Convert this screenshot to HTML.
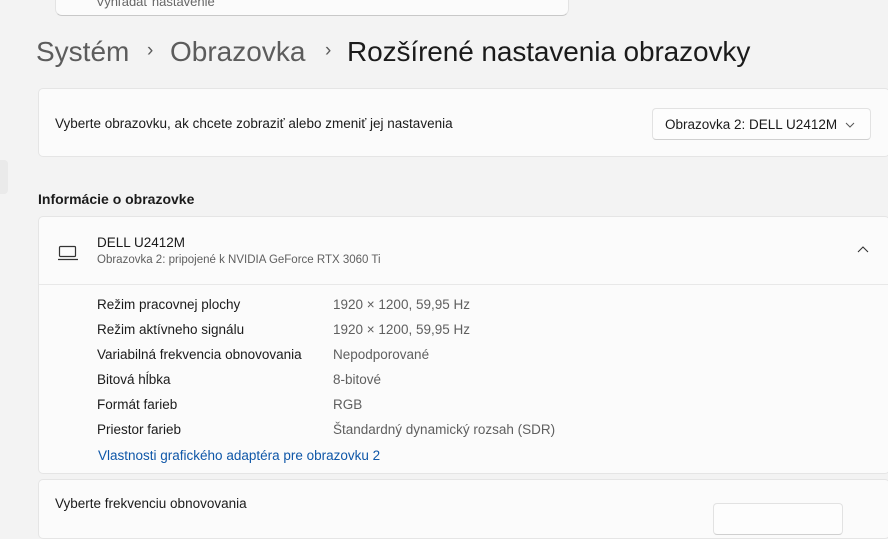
<!DOCTYPE html>
<html><head><meta charset="utf-8"><style>
*{margin:0;padding:0;box-sizing:border-box}
body{width:888px;height:510px;overflow:hidden;background:#f3f3f3;font-family:"Segoe UI","Liberation Sans",sans-serif;color:#1b1b1b;position:relative}
.abs{position:absolute;white-space:nowrap}
.search{left:55px;top:-20px;width:514px;height:36px;background:#fbfbfb;border:1px solid #e3e3e3;border-bottom-color:#c8c8c8;border-radius:7px}
.card{position:absolute;left:38px;width:852px;background:#fbfbfb;border:1px solid #e5e5e5;border-radius:5px}
.dd{position:absolute;background:#fdfdfd;border:1px solid #e2e2e2;border-bottom-color:#d0d0d0;border-radius:4px}
.lab{font-size:13.5px;color:#1b1b1b}
.val{font-size:13.5px;color:#5f5f5f}
</style></head><body>
<div class="abs search"><span class="abs" style="left:40px;top:13px;font-size:13px;color:#666">Vyhľadať nastavenie</span></div>
<div class="abs" style="left:36px;top:36px;font-size:28px;color:#5c5c5c">Systém</div>
<div class="abs" style="left:147px;top:40px;font-size:19px;color:#5c5c5c">›</div>
<div class="abs" style="left:170px;top:36px;font-size:28px;color:#5c5c5c">Obrazovka</div>
<div class="abs" style="left:325px;top:40px;font-size:19px;color:#5c5c5c">›</div>
<div class="abs" style="left:347px;top:36px;font-size:28px;color:#1b1b1b;letter-spacing:-0.1px">Rozšírené nastavenia obrazovky</div>

<div class="card" style="top:88px;height:69px">
<div class="abs lab" style="left:16px;top:27px;font-size:13.5px">Vyberte obrazovku, ak chcete zobraziť alebo zmeniť jej nastavenia</div>
<div class="dd" style="left:613px;top:19px;width:219px;height:32px">
<span class="abs" style="left:12px;top:8px;font-size:13.5px">Obrazovka 2: DELL U2412M</span>
<svg class="abs" style="left:192px;top:12px" width="10" height="8"><path d="M1 2l4 4 4-4" fill="none" stroke="#555" stroke-width="1"/></svg>
</div></div>

<div class="abs" style="left:0;top:160px;width:8px;height:34px;background:#eaeaea;border-radius:0 4px 4px 0"></div>
<div class="abs" style="left:38px;top:191px;font-size:14px;font-weight:600">Informácie o obrazovke</div>

<div class="card" style="top:216px;height:258px">
<svg class="abs" style="left:18px;top:27px" width="22" height="18"><rect x="2.5" y="2.5" width="16" height="10" rx="1" fill="none" stroke="#333" stroke-width="1.2"/><path d="M1 15.5h20" stroke="#333" stroke-width="1.3"/></svg>
<div class="abs" style="left:58px;top:18px;font-size:13.5px">DELL U2412M</div>
<div class="abs" style="left:58px;top:37px;font-size:11.5px;color:#5f5f5f">Obrazovka 2: pripojené k NVIDIA GeForce RTX 3060 Ti</div>
<svg class="abs" style="left:818px;top:29px" width="12" height="8"><path d="M1 6l5-5 5 5" fill="none" stroke="#333" stroke-width="1.1"/></svg>
<div class="abs" style="left:0;top:67px;width:852px;height:1px;background:#e8e8e8"></div>
<div class="abs lab" style="left:58px;top:80px">Režim pracovnej plochy</div><div class="abs val" style="left:294px;top:80px">1920 × 1200, 59,95 Hz</div>
<div class="abs lab" style="left:58px;top:105px">Režim aktívneho signálu</div><div class="abs val" style="left:294px;top:105px">1920 × 1200, 59,95 Hz</div>
<div class="abs lab" style="left:58px;top:130px">Variabilná frekvencia obnovovania</div><div class="abs val" style="left:294px;top:130px">Nepodporované</div>
<div class="abs lab" style="left:58px;top:155px">Bitová hĺbka</div><div class="abs val" style="left:294px;top:155px">8-bitové</div>
<div class="abs lab" style="left:58px;top:180px">Formát farieb</div><div class="abs val" style="left:294px;top:180px">RGB</div>
<div class="abs lab" style="left:58px;top:205px">Priestor farieb</div><div class="abs val" style="left:294px;top:205px">Štandardný dynamický rozsah (SDR)</div>
<div class="abs" style="left:59px;top:231px;font-size:13.5px;color:#0f57a8">Vlastnosti grafického adaptéra pre obrazovku 2</div>
</div>

<div class="card" style="top:479px;height:60px">
<div class="abs lab" style="left:16px;top:16px">Vyberte frekvenciu obnovovania</div>
<div class="dd" style="left:674px;top:23px;width:130px;height:32px"></div>
</div>
</body></html>
